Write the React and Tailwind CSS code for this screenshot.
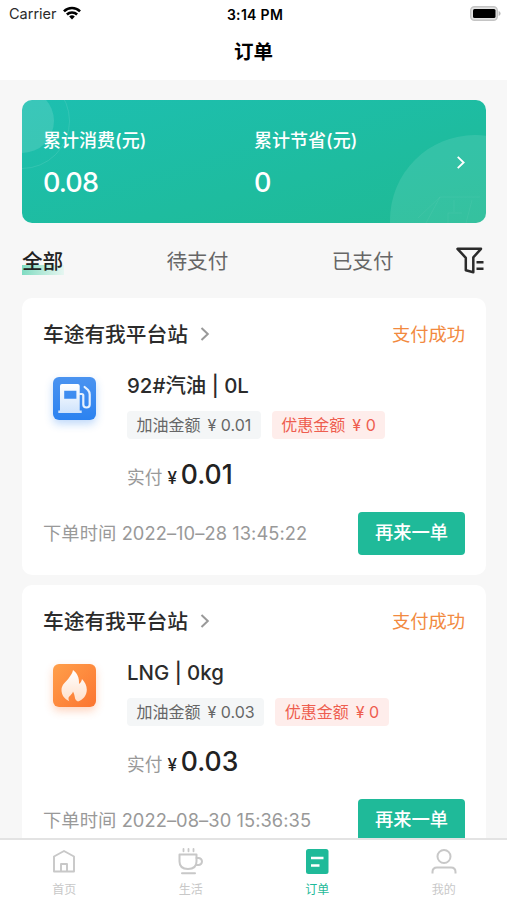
import React, { useState } from 'react';

const orders = [
  {
    id: 1,
    station: '车途有我平台站',
    status: '支付成功',
    type: 'oil',
    goods: '92#汽油 | 0L',
    amount: '0.01',
    discount: '0',
    paid: '0.01',
    time: '2022-10-28 13:45:22',
  },
  {
    id: 2,
    station: '车途有我平台站',
    status: '支付成功',
    type: 'gas',
    goods: 'LNG | 0kg',
    amount: '0.03',
    discount: '0',
    paid: '0.03',
    time: '2022-08-30 15:36:35',
  },
];

function Chevron({ className }) {
  return (
    <svg className={className} viewBox="0 0 10 14" fill="none" stroke="currentColor" strokeWidth="2">
      <path d="M1.5 1L7.8 7L1.5 13" />
    </svg>
  );
}

function StatusBar() {
  return (
    <div className="h-[28px] shrink-0 grid grid-cols-3 items-center pl-[9px] pr-[6px] text-black leading-none">
      <div className="flex items-center gap-[6px]">
        <span className="text-[#2a2a2a] text-[14.5px]">Carrier</span>
        <svg className="w-[18px] h-[14px] -mt-[2px]" viewBox="0 0 19 14" fill="none" stroke="#000" strokeWidth="2.7">
          <path d="M1 5.2A12.2 12.2 0 0 1 18 5.2" />
          <path d="M4.1 8.6A7.8 7.8 0 0 1 14.9 8.6" />
          <path d="M9.5 13.8L6.5 10.8A4.3 4.3 0 0 1 12.5 10.8Z" fill="#000" stroke="none" />
        </svg>
      </div>
      <span className="pt-px text-center font-semibold text-[14px] tracking-[0.3px]">3:14 PM</span>
      <svg className="justify-self-end w-[31px] h-[15px] -mt-px" viewBox="0 0 31 15">
        <rect x="0.7" y="0.7" width="26.6" height="13.6" rx="3.8" fill="#e4e4e4" stroke="#c4c4c4" strokeWidth="1.4" />
        <rect x="3" y="3" width="22.5" height="9" rx="1.5" fill="#000" />
        <path d="M28.6 5V10C30 9.4 30.6 8.4 30.6 7.5C30.6 6.6 30 5.6 28.6 5Z" fill="#b9b9b9" />
      </svg>
    </div>
  );
}

function SummaryCard() {
  return (
    <div className="relative h-[123px] shrink-0 rounded-[10px] overflow-hidden bg-gradient-to-br from-[#1dbfb0] to-[#1fba94] text-white">
      {/* Background decoration */}
      <svg className="absolute inset-0 w-full h-full" viewBox="0 0 464 123" fill="none">
        <circle cx="0" cy="21" r="32" fill="#fff" fillOpacity="0.13" />
        <circle cx="0" cy="21" r="47.5" stroke="#fff" strokeOpacity="0.1" />
        <circle cx="453" cy="120" r="85" fill="#fff" fillOpacity="0.1" />
        <path d="M396 118L418 97H458M418 97L404 123M432 100V112M450 100L444 123M426 123V113H440" stroke="#fff" strokeOpacity="0.05" />
      </svg>
      <div className="relative h-full flex items-center pl-[21px] pr-[20px]">
        <div className="w-[211px] flex flex-col gap-[14px]">
          <div className="text-[18px] leading-[28px] font-medium whitespace-nowrap">累计消费(元)</div>
          <div className="text-[27px] leading-[28px] font-medium tracking-[-0.9px]">0.08</div>
        </div>
        <div className="flex-1 flex flex-col gap-[14px]">
          <div className="text-[18px] leading-[28px] font-medium whitespace-nowrap">累计节省(元)</div>
          <div className="text-[27px] leading-[28px] font-medium tracking-[-0.9px]">0</div>
        </div>
        <Chevron className="w-[10px] h-[13px] mt-[2px]" />
      </div>
    </div>
  );
}

function FilterIcon() {
  return (
    <svg className="w-[28px] h-[27px]" viewBox="0 0 28 27" fill="none" stroke="#2b2b2b" strokeWidth="2.5" strokeLinejoin="round">
      <path d="M1.5 1.8H25L17.3 10.4V25.2L9.8 23.2V10.8Z" />
      <path d="M20.5 15.2H27.5M20.5 21.8H27.5" strokeWidth="2.6" />
    </svg>
  );
}

function Tabs() {
  const [active, setActive] = useState('全部');
  const tabs = ['全部', '待支付', '已支付'];

  return (
    <div className="h-[75px] shrink-0 flex items-center justify-between text-[20.6px] leading-[28px] text-[#666]">
      {tabs.map((tab) => (
        <button
          key={tab}
          onClick={() => setActive(tab)}
          className={
            tab === active
              ? 'relative w-[41px] pt-[3px] font-medium text-[#222] whitespace-nowrap'
              : 'pt-[3px] whitespace-nowrap'
          }
        >
          {tab === active && (
            <span className="absolute left-0 bottom-[1px] w-[42px] h-[10px] bg-gradient-to-r from-[#7fdcc2] to-[#e6f6f1]"></span>
          )}
          <span className="relative">{tab}</span>
        </button>
      ))}
      <div className="-ml-[41px] pr-[2px]">
        <FilterIcon />
      </div>
    </div>
  );
}

function GoodsIcon({ type }) {
  if (type === 'oil') {
    return (
      <div className="w-[43px] h-[43px] rounded-[6px] bg-gradient-to-b from-[#4a93f0] to-[#2b82f0] shadow-[0_4px_8px_rgba(43,130,240,0.3)]">
        <svg viewBox="0 0 43 43">
          <defs>
            <linearGradient id="pump" x1="0" y1="0" x2="0" y2="1">
              <stop offset="0" stopColor="#fff" />
              <stop offset="1" stopColor="#cfe3fc" />
            </linearGradient>
          </defs>
          <path
            d="M7 9Q7 7 9 7H24.7Q26.7 7 26.7 9V33.5H28.7V36H5.3V33.5H7ZM11.2 13.7V21.8H23.4V13.7Z"
            fill="url(#pump)"
            fillRule="evenodd"
          />
          <path
            d="M27 17H28.8Q30.3 17 30.3 18.5V27.5Q30.3 30.5 33.5 30.5Q36.700 30.500 36.700 27.500V17.500Q36.700 15 35 13L31.600 10"
            fill="none"
            stroke="#e6f1fe"
            strokeWidth="2.2"
            strokeLinecap="round"
          />
        </svg>
      </div>
    );
  }
  return (
    <div className="w-[43px] h-[43px] rounded-[6px] bg-gradient-to-br from-[#ff9f4a] to-[#fb7430] shadow-[0_4px_8px_rgba(251,116,48,0.3)]">
      <svg viewBox="0 0 43 43">
        <defs>
          <linearGradient id="flame" x1="0" y1="0" x2="0" y2="1">
            <stop offset="0" stopColor="#fff" />
            <stop offset="1" stopColor="#ffe0cb" />
          </linearGradient>
        </defs>
        <path
          d="M20 6C24 9 26.5 13.5 26 20C27.6 19 28.600 17.200 29 15C32 18 33.800 21.800 33.800 25.800C33.800 31.500 30 36 25 37.500C23 36.800 22 35 21.800 33C21.500 31 20.800 29 20 27.500C19.500 30.500 15.500 32 15.500 34.500C15.500 35.500 15.700 36.500 16.300 37.300C11.500 35 8.500 31 8.500 26C8.500 20.500 13 18 15.500 14.500C17.700 11.500 19.500 9 20 6Z"
          fill="url(#flame)"
        />
      </svg>
    </div>
  );
}

function OrderCard({ order }) {
  return (
    <div className="h-[277px] shrink-0 rounded-[10px] bg-white px-[21px] pt-[23px] text-[18.3px]">
      <div className="h-[28px] flex items-center justify-between">
        <div className="flex items-center gap-[12px] text-[20.7px] leading-[28px] font-medium text-[#2b2b2b]">
          {order.station}
          <Chevron className="w-[10px] h-[14px] -mt-[2px] text-[#999]" />
        </div>
        <span className="-mt-[2px] leading-[28px] text-[#f28a3f]">{order.status}</span>
      </div>

      <div className="flex pt-[23px]">
        <div className="w-[84px] pl-[10px] pt-[5px]">
          <GoodsIcon type={order.type} />
        </div>
        <div className="flex-1">
          <div className="text-[20.4px] leading-[28px] font-medium text-[#2b2b2b]">{order.goods}</div>
          <div className="flex gap-[11px] mt-[11px] text-[16px] leading-[28px] whitespace-nowrap">
            <span className="flex gap-[7px] px-[9.5px] rounded-[4px] bg-[#f4f6f7] text-[#666]">
              加油金额<span>¥ {order.amount}</span>
            </span>
            <span className="flex gap-[7px] px-[9.5px] rounded-[4px] bg-[#feedeb] text-[#ee5d4f]">
              优惠金额<span>¥ {order.discount}</span>
            </span>
          </div>
          <div className="flex items-baseline mt-[17px] h-[36px] leading-[36px] font-medium text-[#222]">
            <span className="font-normal text-[17.7px] text-[#999]">实付</span>
            <span className="ml-[5px] text-[17px]">¥</span>
            <span className="ml-[4px] text-[26.5px]">{order.paid}</span>
          </div>
        </div>
      </div>

      <div className="h-[43px] mt-[20px] flex items-center justify-between">
        <span className="text-[#999] whitespace-nowrap tracking-[0.07px]">
          下单时间 {order.time.replaceAll('-', '–')}
        </span>
        <button className="w-[107px] h-[43px] pb-[2px] rounded-[4px] bg-[#1fba99] font-medium text-white whitespace-nowrap">
          再来一单
        </button>
      </div>
    </div>
  );
}

function TabBar() {
  return (
    <div className="h-[62px] shrink-0 grid grid-cols-4 bg-white border-t-2 border-[#e3e3e3] pl-px text-[12px] leading-[16px] text-[#c8c8c8]">
      <div className="flex flex-col items-center gap-[6px] pt-[8px]">
        <svg className="w-[28px] h-[28px]" viewBox="0 0 28 28" fill="none" stroke="currentColor" strokeWidth="1.9" strokeLinejoin="round">
          <path d="M4 8.5L14 3L24 8.5V23.5H4Z" />
          <path d="M11 23.5V16H17V23.5" />
        </svg>
        首页
      </div>
      <div className="flex flex-col items-center gap-[6px] pt-[8px]">
        <svg className="w-[28px] h-[28px]" viewBox="0 0 28 28" fill="none" stroke="currentColor" strokeWidth="2" strokeLinecap="round">
          <path d="M2.5 6.5H19.5V13.5Q19.5 21 11 21Q2.5 21 2.5 13.5Z" strokeLinejoin="round" />
          <path d="M19.5 10H21.5A3 3 0 0 1 21.5 17H19" />
          <path d="M5 25.2H18" />
          <path d="M6.5 1V3.3M11.5 1V3.3M16.5 1V3.3" strokeWidth="1.8" />
        </svg>
        生活
      </div>
      <div className="flex flex-col items-center gap-[6px] pt-[8px] text-[#1fba99]">
        <svg className="w-[28px] h-[28px]" viewBox="0 0 28 28">
          <rect x="3" y="1" width="22.5" height="25" rx="2.5" fill="currentColor" />
          <path d="M8 10H20.5M8 17.5H16.5" stroke="#fff" strokeWidth="2.5" />
        </svg>
        订单
      </div>
      <div className="flex flex-col items-center gap-[6px] pt-[8px]">
        <svg className="w-[28px] h-[28px]" viewBox="0 0 28 28" fill="none" stroke="currentColor" strokeWidth="2">
          <circle cx="14" cy="8.5" r="6.5" />
          <path d="M2.5 25.5V24Q2.5 19.5 7 19.5H21Q25.5 19.5 25.5 24V25.5" />
        </svg>
        我的
      </div>
    </div>
  );
}

export default function App() {
  return (
    <div className="w-[507px] h-[900px] flex flex-col overflow-hidden bg-white font-['Inter','Noto_Sans_CJK_SC',sans-serif]">
      <StatusBar />
      <div className="h-[52px] shrink-0 flex items-center justify-center pb-[4px] text-[19.5px] leading-[28px] font-bold text-black">
        订单
      </div>

      <div className="flex-1 min-h-0 flex flex-col overflow-hidden bg-[#f7f7f7] pl-[22px] pr-[21px] pt-[20px]">
        <SummaryCard />
        <Tabs />
        <div className="flex flex-col gap-[10px]">
          {orders.map((order) => (
            <OrderCard key={order.id} order={order} />
          ))}
        </div>
      </div>

      <TabBar />
    </div>
  );
}
